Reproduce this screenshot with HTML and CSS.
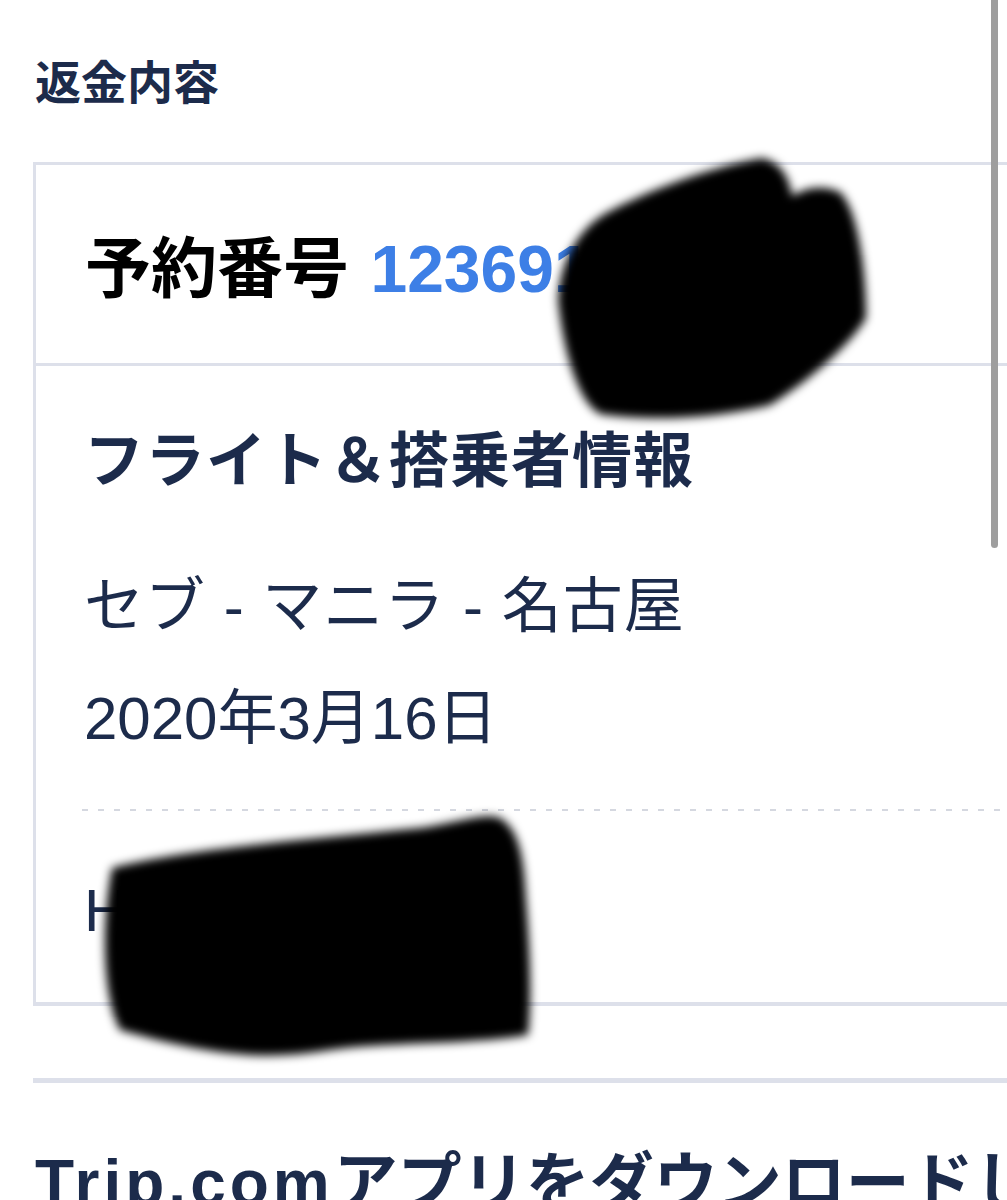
FILE: index.html
```html
<!DOCTYPE html>
<html lang="ja">
<head>
    <meta charset="UTF-8">
    <meta name="viewport" content="width=device-width, initial-scale=1.0">
    <title>返金内容</title>
    <link rel="stylesheet" href="styles.css">
</head>
<body>
<div class="page">
    <h1 class="section-title">返金内容</h1>

    <div class="card">
        <div class="card-head">
            <span class="label">予約番号</span>
            <span class="order-no">12369100000</span>
        </div>
        <div class="card-body">
            <h2 class="block-title">フライト＆搭乗者情報</h2>
            <div class="route">セブ - マニラ - 名古屋</div>
            <div class="date">2020年3月16日</div>
            <div class="dash"></div>
            <div class="passenger">HXXXXX/XXXX</div>
        </div>
    </div>

    <div class="app-promo">
        <h2 class="promo-title"><span class="brand">Trip.com</span>アプリをダウンロードして</h2>
    </div>
</div>

<!-- redaction marks drawn over the screenshot -->
<svg class="redact" width="1007" height="1200" viewBox="0 0 1007 1200">
    <defs>
        <filter id="soft" x="-10%" y="-10%" width="120%" height="120%">
            <feGaussianBlur stdDeviation="5"/>
        </filter>
    </defs>
    <path filter="url(#soft)" d="M612 210 C660 185 720 165 762 158 C782 162 790 180 792 196 C805 188 822 184 840 192 C858 210 866 270 866 318 C850 345 810 380 770 405 C720 418 650 422 600 414 C575 400 562 340 558 300 C560 260 580 225 612 210 Z"/>
    <path filter="url(#soft)" d="M112 868 C180 850 300 840 420 828 C460 822 485 812 500 818 C520 830 524 860 526 900 C530 950 532 1000 528 1035 C470 1045 380 1042 330 1050 C270 1060 220 1058 120 1030 C104 1000 100 930 112 868 Z"/>
</svg>

<div class="scrollbar"></div>
</body>
</html>
```

FILE: styles.css
```css
body {
    margin: 0;
    background-color: #ffffff;
    font-family: "Liberation Sans", "Noto Sans CJK JP", sans-serif;
    color: #1c2b4b;
    overflow: hidden;
}
.page {
    padding-left: 33px;
    width: 974px;
}
.section-title {
    font-size: 46px;
    line-height: 1;
    font-weight: bold;
    margin: 60px 0 56px 2px;
}
.card {
    border: 3px solid #dde0ea;
    border-bottom-width: 4px;
    border-right: none;
}
.card-head {
    padding: 71px 0 61px 49px;
    border-bottom: 3px solid #dde0ea;
    line-height: 1;
    font-weight: bold;
}
.label {
    font-size: 66px;
    color: #000000;
}
.order-no {
    font-size: 66px;
    color: #3d7fe6;
    margin-left: 17px;
}
.card-body {
    padding: 66px 0 61px 48px;
}
.block-title {
    font-size: 60px;
    line-height: 1;
    font-weight: bold;
    letter-spacing: 1px;
    margin: 0 0 85px;
}
.route, .date, .passenger {
    font-size: 60px;
    line-height: 1;
}
.route {
    letter-spacing: 1px;
}
.date {
    margin-top: 52px;
}
.dash {
    height: 2px;
    margin: 60px 0 0 -2px;
    background: repeating-linear-gradient(to right, #d5d8e0 0 6px, transparent 6px 16px);
}
.passenger {
    margin-top: 70px;
}
.app-promo {
    margin-top: 72px;
    border-top: 5px solid #dde0ea;
    padding-top: 68px;
    overflow: hidden;
}
.promo-title {
    margin: 0 0 0 2px;
    font-size: 64px;
    line-height: 1;
    font-weight: bold;
    white-space: nowrap;
}
.brand {
    letter-spacing: 4px;
}
.redact {
    position: absolute;
    top: 0;
    left: 0;
    pointer-events: none;
}
.redact path {
    fill: #000000;
}
.scrollbar {
    position: fixed;
    top: 0;
    left: 991px;
    width: 7px;
    height: 548px;
    border-radius: 0 0 4px 4px;
    background-color: #9e9e9e;
}
```
